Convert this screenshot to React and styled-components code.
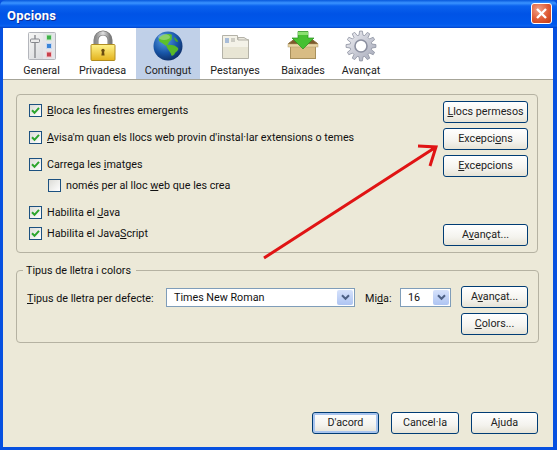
import React from 'react';
import styled, { createGlobalStyle } from 'styled-components';

const Global = createGlobalStyle`
  html, body { margin: 0; padding: 0; background: #ece9d8; }
  body { font-family: Roboto, "Noto Sans", sans-serif; font-size: 10.75px; color: #111; }
  u { text-decoration-thickness: 1px; text-underline-offset: 1px; }
`;

const Window = styled.div`
  position: relative;
  width: 557px;
  height: 450px;
  display: flex;
  flex-direction: column;
  background: #0650e0;
  overflow: hidden;
`;

const TitleBar = styled.div`
  height: 28px;
  flex: none;
  display: flex;
  align-items: center;
  justify-content: space-between;
  padding: 0 5px 1px 7px;
  box-sizing: border-box;
  border-radius: 6px 6px 0 0;
  background: linear-gradient(180deg, #0758dc 0, #3a93ff 3px, #0a62ee 6px, #0053e6 14px, #0058ec 24px, #0a62f0 26px, #0040c8 28px);
`;

const Title = styled.span`
  font-weight: 700;
  font-size: 13px;
  color: #fff;
  letter-spacing: 0.2px;
  padding-top: 3px;
  text-shadow: 1px 1px 0 #0f2f9a;
`;

const CloseButton = styled.div`
  width: 21px;
  height: 21px;
  box-sizing: border-box;
  border: 1px solid #fff;
  border-radius: 3px;
  background: radial-gradient(circle at 35% 30%, #f0a088, #df5a34 55%, #c23a14);
  display: flex;
  align-items: center;
  justify-content: center;
`;

const Client = styled.div`
  flex: 1;
  margin: 0 4px 3px 3px;
  display: flex;
  flex-direction: column;
  background: #ece9d8;
`;

const Toolbar = styled.div`
  height: 52px;
  flex: none;
  box-sizing: border-box;
  display: flex;
  padding-left: 11px;
  background: #fff;
  border-bottom: 1px solid #a6a498;
`;

const Tab = styled.div`
  width: ${p => p.$w}px;
  flex: none;
  display: flex;
  flex-direction: column;
  align-items: center;
  padding-top: 2px;
  box-sizing: border-box;
  background: ${p => (p.$active ? '#c0d0e8' : 'transparent')};
  color: #222;
  line-height: 15px;
  svg { display: block; margin-bottom: 1px; }
`;

const Content = styled.div`
  flex: 1;
  display: flex;
  flex-direction: column;
  padding: 14px 15px 13px 13px;
`;

const TopGroup = styled.div`
  height: 159px;
  flex: none;
  box-sizing: border-box;
  display: flex;
  justify-content: space-between;
  padding: 5px 9px 6px 12px;
  border: 1px solid #b5b2a2;
  border-radius: 4px;
`;

const CheckList = styled.div`
  display: flex;
  flex-direction: column;
`;

const Row = styled.label`
  height: 21px;
  display: flex;
  align-items: center;
  gap: 5px;
  margin-top: ${p => p.$top || 0}px;
  margin-left: ${p => p.$indent || 0}px;
`;

const Box = styled.span`
  width: 13px;
  height: 13px;
  flex: none;
  box-sizing: border-box;
  border: 1px solid #1c5180;
  background: linear-gradient(135deg, #dcdcd7, #fff);
  display: flex;
  align-items: center;
  justify-content: center;
`;

const ButtonColumn = styled.div`
  display: flex;
  flex-direction: column;
  gap: 5px;
  margin-top: 1px;
`;

const Button = styled.button`
  width: ${p => p.$w || 85}px;
  height: 22px;
  flex: none;
  padding: 0 0 1px;
  margin-top: ${p => (p.$push ? 'auto' : '0')};
  font: inherit;
  color: #222;
  border: 1px solid #003c74;
  border-radius: 3px;
  background: linear-gradient(180deg, #fff 0, #f4f3ee 60%, #e6e3d6 100%);
  box-shadow: ${p => (p.$default ? 'inset 0 0 0 2px #a8c4ee' : 'none')};
`;

const FontGroup = styled.fieldset`
  height: 80px;
  flex: none;
  box-sizing: border-box;
  margin: 10px -1px 0 0;
  padding: 8px 10px 0 10px;
  border: 1px solid #b5b2a2;
  border-radius: 4px;
  min-inline-size: 0;
`;

const Legend = styled.legend`
  padding: 1px 5px 0 3px;
  margin-left: -4px;
  line-height: 14px;
`;

const FontRow = styled.div`
  display: flex;
  align-items: flex-start;
`;

const FieldLabel = styled.span`
  margin: 5px ${p => p.$gap}px 0 ${p => p.$left || 0}px;
  line-height: 15px;
  white-space: nowrap;
  width: ${p => p.$w}px;
`;

const Select = styled.div`
  width: ${p => p.$w}px;
  height: 19px;
  flex: none;
  margin-top: 2px;
  box-sizing: border-box;
  display: flex;
  align-items: center;
  justify-content: space-between;
  padding: 0 1px 0 7px;
  border: 1px solid #7f9db9;
  background: #fff;
`;

const Arrow = styled.span`
  width: 16px;
  height: 15px;
  border-radius: 2px;
  background: linear-gradient(180deg, #d6e2fb, #aec4f2);
  display: flex;
  align-items: center;
  justify-content: center;
`;

const SideButtons = styled.div`
  margin-left: 10px;
  display: flex;
  flex-direction: column;
  gap: 5px;
`;

const Footer = styled.div`
  margin-top: auto;
  display: flex;
  justify-content: flex-end;
  gap: 12px;
`;

const Overlay = styled.svg`
  position: absolute;
  left: 0;
  top: 0;
  pointer-events: none;
`;

const Check = ({ on }) => (
  <Box>
    {on && (
      <svg width="9" height="9" viewBox="0 0 9 9">
        <path d="M1 4.2 L3.5 6.8 L8 1.8" fill="none" stroke="#2ca52c" strokeWidth="2" />
      </svg>
    )}
  </Box>
);

const Chevron = () => (
  <svg width="9" height="7" viewBox="0 0 9 7">
    <path d="M1 1.2 L4.5 4.8 L8 1.2" fill="none" stroke="#4d6185" strokeWidth="2" />
  </svg>
);

const GeneralIcon = () => (
  <svg width="32" height="32" viewBox="0 0 32 32">
    <defs>
      <linearGradient id="gen" x1="0" y1="0" x2="1" y2="1">
        <stop offset="0" stopColor="#f8f8f6" />
        <stop offset="1" stopColor="#d0d2d8" />
      </linearGradient>
    </defs>
    <rect x="2.5" y="2.5" width="27" height="27" rx="1" fill="url(#gen)" stroke="#b4b6bc" />
    <rect x="17" y="3" width="12" height="26" fill="#e4e5e9" />
    <path d="M9 5 V28" stroke="#77797e" strokeWidth="1.2" />
    <rect x="4.5" y="9" width="9" height="3.5" rx="1" fill="#ececec" stroke="#85878c" />
    <rect x="20.5" y="5" width="5" height="5" fill="#3fb04a" stroke="#c8e8c8" />
    <rect x="20.5" y="13.5" width="5" height="5" fill="#3a84d8" stroke="#c8d8f0" />
    <rect x="20.5" y="22" width="5" height="5" fill="#c8404c" stroke="#f0c8cc" />
  </svg>
);

const LockIcon = () => (
  <svg width="32" height="32" viewBox="0 0 32 32">
    <defs>
      <linearGradient id="lockBody" x1="0" y1="0" x2="0" y2="1">
        <stop offset="0" stopColor="#fff38a" />
        <stop offset="1" stopColor="#e3b21c" />
      </linearGradient>
      <linearGradient id="lockBar" x1="0" y1="0" x2="1" y2="0">
        <stop offset="0" stopColor="#8c8c8c" />
        <stop offset="0.5" stopColor="#e2e2e2" />
        <stop offset="1" stopColor="#7c7c7c" />
      </linearGradient>
    </defs>
    <path d="M9 15 V10 a7 7 0 0 1 14 0 V15" fill="none" stroke="#7a7a7a" strokeWidth="5" />
    <path d="M9 15 V10 a7 7 0 0 1 14 0 V15" fill="none" stroke="url(#lockBar)" strokeWidth="3.4" />
    <rect x="4" y="14.5" width="24" height="16" rx="1" fill="url(#lockBody)" stroke="#b08c20" />
    <circle cx="16" cy="20.5" r="1.7" fill="#6a4c10" />
    <path d="M15 21 h2 l.6 4.5 h-3.2 z" fill="#6a4c10" />
  </svg>
);

const GlobeIcon = () => (
  <svg width="32" height="32" viewBox="0 0 32 32">
    <defs>
      <radialGradient id="sea" cx="0.38" cy="0.3" r="0.8">
        <stop offset="0" stopColor="#5a9ee4" />
        <stop offset="0.55" stopColor="#1856a8" />
        <stop offset="1" stopColor="#0a2458" />
      </radialGradient>
    </defs>
    <circle cx="16" cy="16" r="14.5" fill="url(#sea)" />
    <path d="M7 8 C10 4 17 3 20 5 C19 8 21 9 18 11 C16 12 17 14 15 15 C14 17 12 14 10 13 C8 12 6 11 7 8 Z" fill="#5cc02c" />
    <path d="M14 15 C18 14 24 15 26 18 C27 20 25 21 23 23 C22 26 19 27 19 24 C18 21 15 19 14 15 Z" fill="#58b828" />
    <path d="M22 7 C24 8 26 10 26 12 C24 12 22 10 22 7 Z" fill="#4ca824" />
    <ellipse cx="12" cy="7" rx="6" ry="3" fill="#fff" opacity="0.28" />
  </svg>
);

const TabsIcon = () => (
  <svg width="32" height="32" viewBox="0 0 32 32">
    <path d="M3.5 5.5 H18.5 V9.5 H29.5 V28.5 H3.5 Z" fill="#f4f2e8" stroke="#b4b2a8" />
    <path d="M19 7.5 H25 L29 10 H19 Z" fill="#e8e6dc" stroke="#b4b2a8" />
    <rect x="4" y="17" width="25" height="11" fill="#e8e5d4" />
    <rect x="6" y="8" width="4" height="5" fill="#a8bcd8" />
    <path d="M12 9 H16 M12 11 H16" stroke="#a8a8a0" />
  </svg>
);

const BoxIcon = () => (
  <svg width="32" height="32" viewBox="0 0 32 32">
    <path d="M1.5 13.5 L7 9.5 H25 L30.5 13.5 V16 H1.5 Z" fill="#7c5a2c" stroke="#8a6a3a" />
    <rect x="3.5" y="15.5" width="25" height="13" fill="#d8bc84" stroke="#a8905c" />
    <rect x="1" y="14" width="30" height="3" fill="#e8d4a4" stroke="#b09c6c" strokeWidth="0.5" />
    <path d="M11 1.5 H21 V8 H27 L16 19 L5 8 H11 Z" fill="#46c032" stroke="#2a9020" strokeWidth="0.7" />
    <path d="M11 2 H21 V5 H11 Z" fill="#8ae070" />
  </svg>
);

const gearPath = () => {
  const teeth = 12;
  const pts = [];
  for (let i = 0; i < teeth; i++) {
    const a = (i / teeth) * Math.PI * 2;
    const s = Math.PI / teeth;
    [[11, -1], [15, -0.5], [15, 0.5], [11, 1]].forEach(([r, k]) => {
      const t = a + k * s * 0.7;
      pts.push(`${(16 + r * Math.cos(t)).toFixed(1)} ${(16 + r * Math.sin(t)).toFixed(1)}`);
    });
  }
  return `M${pts.join(' L')} Z`;
};

const GearIcon = () => (
  <svg width="32" height="32" viewBox="0 0 32 32">
    <defs>
      <linearGradient id="gear" x1="0" y1="0" x2="1" y2="1">
        <stop offset="0" stopColor="#f0f0f4" />
        <stop offset="1" stopColor="#a4a8b8" />
      </linearGradient>
    </defs>
    <path d={gearPath()} fill="url(#gear)" stroke="#8c90a0" strokeWidth="0.8" />
    <circle cx="16" cy="16" r="6" fill="#fff" stroke="#8c90a0" strokeWidth="1.6" />
  </svg>
);

const tabs = [
  { label: 'General', w: 55, icon: <GeneralIcon /> },
  { label: 'Privadesa', w: 67, icon: <LockIcon /> },
  { label: 'Contingut', w: 64, icon: <GlobeIcon />, active: true },
  { label: 'Pestanyes', w: 70, icon: <TabsIcon /> },
  { label: 'Baixades', w: 66, icon: <BoxIcon /> },
  { label: 'Avançat', w: 50, icon: <GearIcon /> },
];

export default function App() {
  return (
    <Window>
      <Global />
      <TitleBar>
        <Title>Opcions</Title>
        <CloseButton>
          <svg width="13" height="13" viewBox="0 0 13 13">
            <path d="M2 2 L11 11 M11 2 L2 11" stroke="#fff" strokeWidth="2.4" />
          </svg>
        </CloseButton>
      </TitleBar>
      <Client>
        <Toolbar>
          {tabs.map(t => (
            <Tab key={t.label} $w={t.w} $active={t.active}>
              {t.icon}
              {t.label}
            </Tab>
          ))}
        </Toolbar>
        <Content>
          <TopGroup>
            <CheckList>
              <Row><Check on /><span><u>B</u>loca les finestres emergents</span></Row>
              <Row $top={6}><Check on /><span><u>A</u>visa'm quan els llocs web provin d'instal·lar extensions o temes</span></Row>
              <Row $top={6}><Check on /><span>Carrega les <u>i</u>matges</span></Row>
              <Row $indent={19}><Check /><span>només per al lloc <u>w</u>eb que les crea</span></Row>
              <Row $top={6}><Check on /><span>Habilita el <u>J</u>ava</span></Row>
              <Row><Check on /><span>Habilita el Java<u>S</u>cript</span></Row>
            </CheckList>
            <ButtonColumn>
              <Button><u>L</u>locs permesos</Button>
              <Button>Excepci<u>o</u>ns</Button>
              <Button><u>E</u>xcepcions</Button>
              <Button $push>A<u>v</u>ançat...</Button>
            </ButtonColumn>
          </TopGroup>
          <FontGroup>
            <Legend>Tipus de lletra i colors</Legend>
            <FontRow>
              <FieldLabel $w={129} $gap={10}><u>T</u>ipus de lletra per defecte:</FieldLabel>
              <Select $w={189}>Times New Roman<Arrow><Chevron /></Arrow></Select>
              <FieldLabel $w={25} $gap={10} $left={10}>Mi<u>d</u>a:</FieldLabel>
              <Select $w={51}>16<Arrow><Chevron /></Arrow></Select>
              <SideButtons>
                <Button $w={67}>A<u>v</u>ançat...</Button>
                <Button $w={67}><u>C</u>olors...</Button>
              </SideButtons>
            </FontRow>
          </FontGroup>
          <Footer>
            <Button $w={67} $default>D'acord</Button>
            <Button $w={68}>Cancel·la</Button>
            <Button $w={67}>Ajuda</Button>
          </Footer>
        </Content>
      </Client>
      <Overlay width="557" height="450" viewBox="0 0 557 450">
        <path d="M264 258 L436 147 M418 146 L436 147 L430 166" fill="none" stroke="#e01414" strokeWidth="3" />
      </Overlay>
    </Window>
  );
}
